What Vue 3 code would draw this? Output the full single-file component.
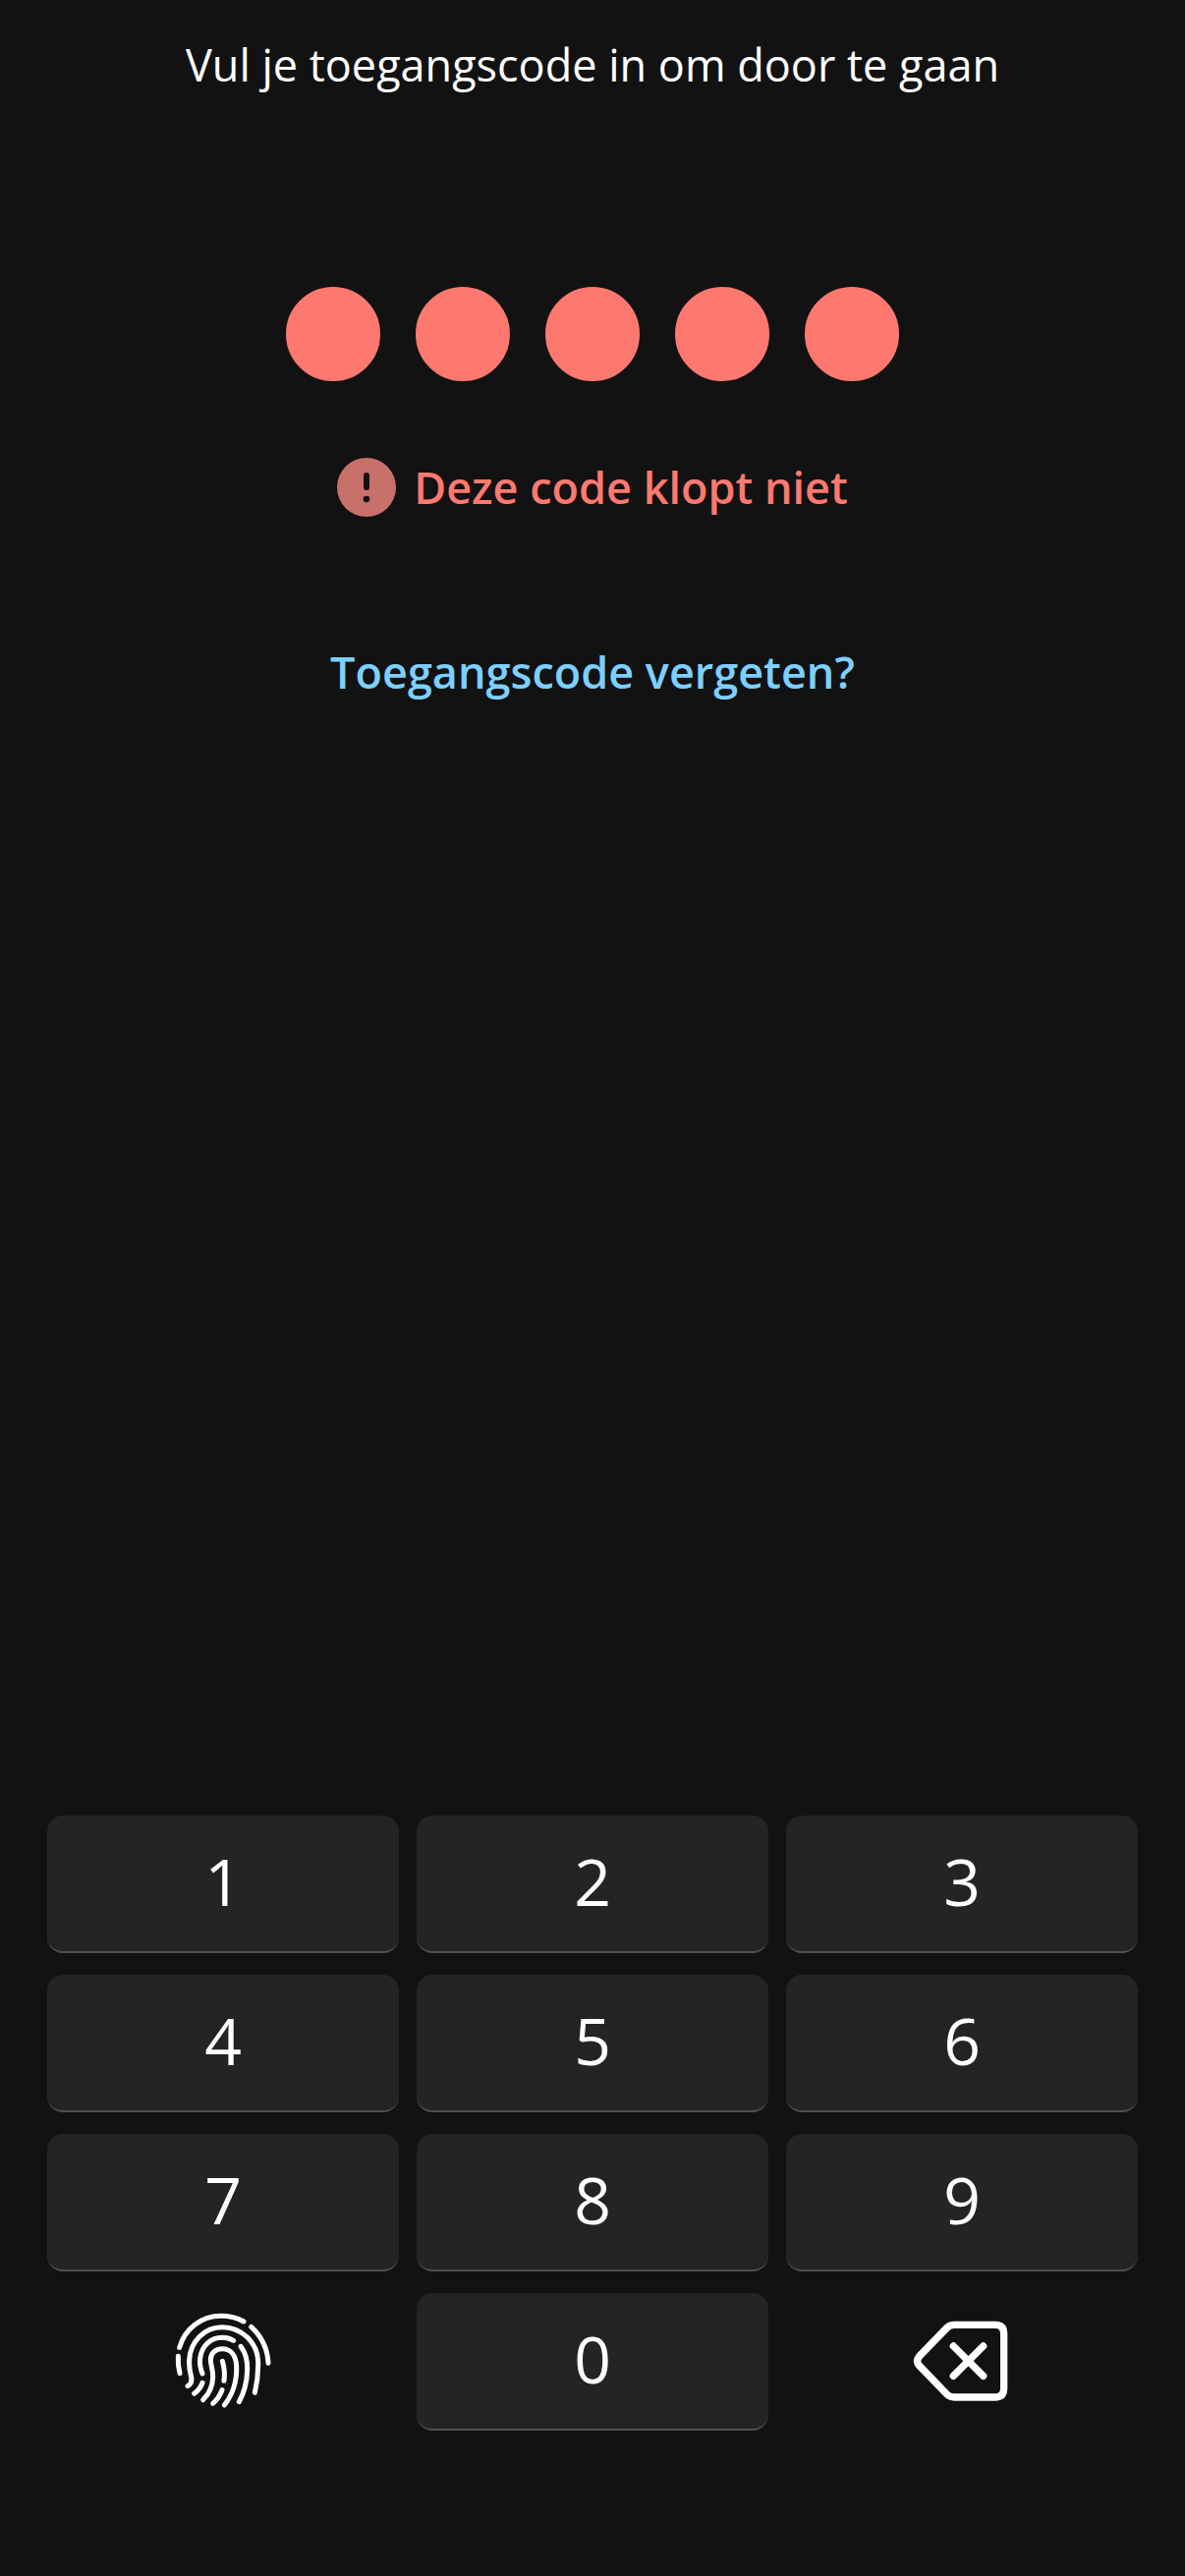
<script setup>
import { ref } from 'vue'

const codeLength = 5
const code = ref('00000')
const digits = ['1', '2', '3', '4', '5', '6', '7', '8', '9']

function press(digit) {
  if (code.value.length < codeLength) code.value += digit
}

function erase() {
  code.value = code.value.slice(0, -1)
}
</script>

<template>
  <main class="screen">
    <h1 class="title">Vul je toegangscode in om door te gaan</h1>

    <div class="dots" role="img" aria-label="Toegangscode">
      <span
        v-for="n in codeLength"
        :key="n"
        class="dot"
        :class="{ filled: n <= code.length }"
      ></span>
    </div>

    <p class="error" role="alert">
      <svg class="error-icon" viewBox="0 0 60 60" aria-hidden="true">
        <circle cx="30" cy="30" r="30" fill="#c8706a" />
        <path d="M30 18V30" stroke="#121212" stroke-width="6" stroke-linecap="round" />
        <circle cx="30" cy="42" r="3.3" fill="#121212" />
      </svg>
      <span>Deze code klopt niet</span>
    </p>

    <a class="forgot" href="#">Toegangscode vergeten?</a>

    <div class="keypad">
      <button
        v-for="digit in digits"
        :key="digit"
        type="button"
        class="key"
        @click="press(digit)"
      >{{ digit }}</button>

      <button type="button" class="key plain" aria-label="Vingerafdruk">
        <svg class="key-icon" viewBox="50 40 300 300" aria-hidden="true">
          <g fill="none" stroke="#fff" stroke-width="15" stroke-linecap="round">
            <path d="M67 149C84 91 135 53 193 53C219 53 243 59 263 70" />
            <path d="M286 86C316 114 336 151 338 197" />
            <path d="M63 176C62 195 64 213 68 228" />
            <path d="M92 267C104 260 106 250 102 235C98 220 96 205 97 187C100 130 144 87 197 87C258 87 305 135 307 192C308 229 304 258 297 287" />
            <path d="M137 229C130 212 128 198 130 182C135 143 164 119 197 119C210 119 222 122 232 128" />
            <path d="M254 146C269 165 275 190 274 218C273 255 264 288 249 315" />
            <path d="M137 257C132 271 124 281 112 290" />
            <path d="M139 309C158 291 168 267 169 240C170 218 162 203 162 187C162 166 178 153 198 153C224 153 239 174 241 205C243 251 230 292 204 325" />
            <path d="M198 191C204 211 206 231 203 251" />
            <path d="M197 279C191 296 182 309 169 320" />
          </g>
        </svg>
      </button>

      <button type="button" class="key" @click="press('0')">0</button>

      <button type="button" class="key plain" aria-label="Wissen" @click="erase">
        <svg class="key-icon" viewBox="57 40 300 300" aria-hidden="true">
          <g fill="none" stroke="#fff" stroke-width="22" stroke-linecap="round" stroke-linejoin="round">
            <path d="M183 80H309Q335 80 335 106V275Q335 301 309 301H183Q170 301 161 292L76 204Q65 191 76 177L161 89Q170 80 183 80Z" />
            <path d="M181 145L272 236M272 145L181 236" />
          </g>
        </svg>
      </button>
    </div>
  </main>
</template>

<style>
body {
  margin: 0;
  background: #121212;
}
</style>

<style scoped>
.screen {
  box-sizing: border-box;
  min-height: 100vh;
  padding: 34px 48px 148px;
  display: flex;
  flex-direction: column;
  align-items: center;
  background: #121212;
  color: #fff;
  font-family: "Open Sans", "Noto Sans", sans-serif;
  font-size: 45px;
  line-height: 64px;
}

.title {
  margin: 0;
  font-size: 45px;
  font-weight: 400;
  text-align: center;
}

.dots {
  display: flex;
  gap: 36px;
  margin-top: 194px;
}

.dot {
  box-sizing: border-box;
  width: 96px;
  height: 96px;
  border: 4px solid #fd796f;
  border-radius: 50%;
}

.dot.filled {
  background: #fd796f;
}

.error {
  display: flex;
  align-items: center;
  gap: 18px;
  margin: 76px 0 0;
  color: #fd796f;
  font-weight: 600;
}

.error-icon {
  width: 60px;
  height: 60px;
}

.forgot {
  margin-top: 124px;
  color: #7dcfff;
  font-weight: 600;
  text-decoration: none;
}

.keypad {
  align-self: stretch;
  display: grid;
  grid-template-columns: repeat(3, 1fr);
  gap: 22px 18px;
  margin-top: auto;
}

.key {
  box-sizing: border-box;
  height: 140px;
  padding: 0 0 6px;
  display: flex;
  align-items: center;
  justify-content: center;
  border: 0;
  border-bottom: 2px solid #505050;
  border-radius: 16px;
  background: #242424;
  color: #fff;
  font: inherit;
  font-size: 66px;
}

.key.plain {
  padding: 0;
  border-color: transparent;
  background: none;
}

.key-icon {
  width: 100px;
  height: 100px;
}
</style>
